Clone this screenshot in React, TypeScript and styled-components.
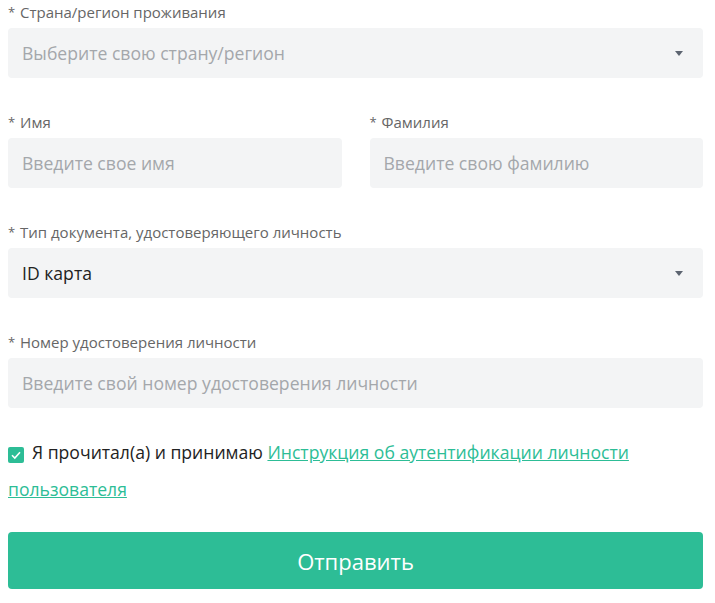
import React from 'react'
import styled, { createGlobalStyle } from 'styled-components'

const GlobalStyle = createGlobalStyle`
  body {
    margin: 0;
    background: #fff;
    font-family: 'Open Sans', 'Noto Sans', sans-serif;
  }
`

const Form = styled.form`
  padding: 0 12px 0 8px;
  display: flex;
  flex-direction: column;
`

const Row = styled.div`
  display: grid;
  grid-template-columns: 1fr 1fr;
  column-gap: 28px;
`

const Field = styled.div`
  display: flex;
  flex-direction: column;
  margin-bottom: 32px;
`

const Label = styled.label`
  display: block;
  height: 20px;
  font-size: 15px;
  line-height: 20px;
  color: #666;
  margin: 2px 0 6px;
  overflow: visible;

  &::before {
    content: '*';
    display: inline-block;
    width: 12px;
    font-size: 13px;
    line-height: 20px;
    vertical-align: top;
    color: #666;
  }
`

const InputBox = styled.div`
  position: relative;
  height: 50px;
  background: #f3f4f5;
  border-radius: 4px;
  display: flex;
  align-items: center;
  padding: 0 14px;
`

const Input = styled.input`
  flex: 1;
  border: none;
  background: transparent;
  outline: none;
  font-family: inherit;
  font-size: 17.6px;
  color: #222;
  padding: 0;

  &::placeholder {
    color: #a4a7ab;
  }
`

const Value = styled.span<{ $placeholder?: boolean }>`
  flex: 1;
  font-size: 17.6px;
  color: ${(p) => (p.$placeholder ? '#a4a7ab' : '#222')};
`

const Caret = styled.span`
  width: 0;
  height: 0;
  border-left: 4.5px solid transparent;
  border-right: 4.5px solid transparent;
  border-top: 5px solid #5c6470;
  margin-right: 6px;
`

const Agreement = styled.div`
  font-size: 17.6px;
  line-height: 37px;
  color: #222;
  margin-top: -6px;

  a {
    color: #2dbd96;
    text-decoration: underline;
  }
`

const Check = styled.span`
  display: inline-flex;
  align-items: center;
  justify-content: center;
  width: 16px;
  height: 16px;
  border-radius: 2px;
  background: #2dbd96;
  vertical-align: -2px;
  margin-right: 8px;
`

const Submit = styled.button`
  margin-top: 24px;
  height: 57px;
  border: none;
  border-radius: 4px;
  background: #2dbd96;
  color: #fff;
  font-family: inherit;
  font-size: 22px;
  cursor: pointer;
`

const SelectField = ({ label, value, placeholder }: { label: string; value?: string; placeholder?: string }) => (
  <Field>
    <Label>{label}</Label>
    <InputBox>
      <Value $placeholder={!value}>{value || placeholder}</Value>
      <Caret />
    </InputBox>
  </Field>
)

const TextField = ({ label, placeholder }: { label: string; placeholder: string }) => (
  <Field>
    <Label>{label}</Label>
    <InputBox>
      <Input placeholder={placeholder} />
    </InputBox>
  </Field>
)

export default function App() {
  return (
    <>
      <GlobalStyle />
      <Form onSubmit={(e) => e.preventDefault()}>
        <SelectField label="Страна/регион проживания" placeholder="Выберите свою страну/регион" />
        <Row>
          <TextField label="Имя" placeholder="Введите свое имя" />
          <TextField label="Фамилия" placeholder="Введите свою фамилию" />
        </Row>
        <SelectField label="Тип документа, удостоверяющего личность" value="ID карта" />
        <TextField label="Номер удостоверения личности" placeholder="Введите свой номер удостоверения личности" />
        <Agreement>
          <Check>
            <svg width="12" height="12" viewBox="0 0 12 12">
              <path d="M2 6.2 L4.8 9 L10 3.2" fill="none" stroke="#fff" strokeWidth="1.6" />
            </svg>
          </Check>
          Я прочитал(а) и принимаю <a href="#">Инструкция об аутентификации личности пользователя</a>
        </Agreement>
        <Submit type="submit">Отправить</Submit>
      </Form>
    </>
  )
}
